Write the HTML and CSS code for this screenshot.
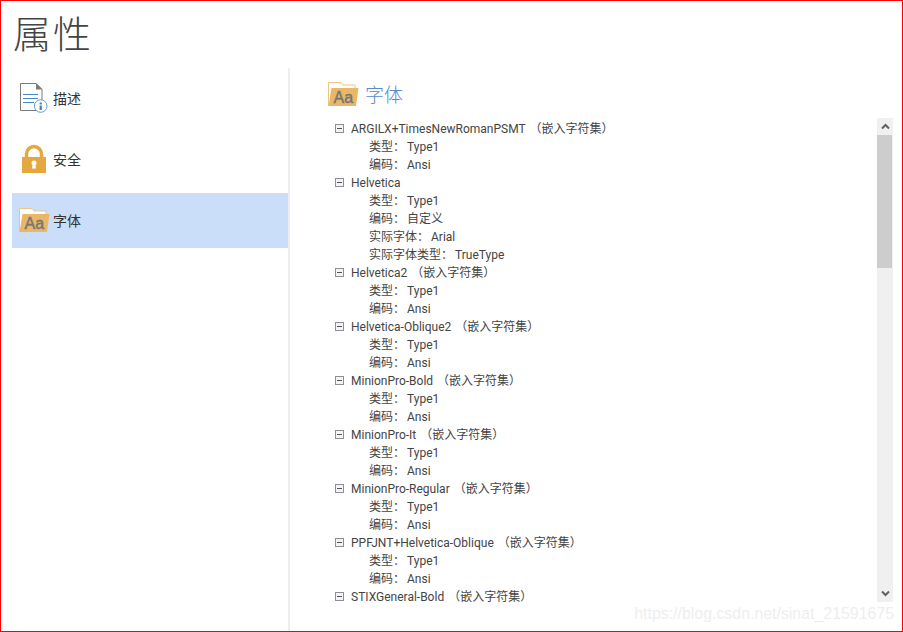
FILE: index.html
```html
<!DOCTYPE html>
<html lang="zh-CN">
<head>
  <meta charset="utf-8">
  <title>属性</title>
  <link rel="stylesheet" href="styles.css">
</head>
<body>
  <div class="window">
    <h1 class="title">属性</h1>
    <div class="main">
      <div class="sidebar">
        <div class="nav-item">
          <svg class="nav-icon" viewBox="0 0 34 35">
            <path d="M1.5 2.5H17L23 8.5V29.5H1.5Z" fill="#fff" stroke="#7a7a7a"/>
            <path d="M17 2L23.5 8.5H17Z" fill="#7a7a7a"/>
            <path d="M4 13.5H19M4 17.5H19M4 21.5H15" stroke="#4a86c5"/>
            <circle cx="21.7" cy="25" r="6.3" fill="#fff" stroke="#689bcf"/>
            <path d="M20.6 21.5h2.2v2h-2.2ZM20.6 24.5h2.2v4.5h-2.2Z" fill="#3f7fbd"/>
          </svg>
          <span>描述</span>
        </div>
        <div class="nav-item">
          <svg class="nav-icon" viewBox="0 0 34 35">
            <path d="M7.5 16V12a7.5 7.5 0 0 1 15 0V16" fill="none" stroke="#e5a840" stroke-width="3.5"/>
            <path d="M3 15H27V31H3Z" fill="#e5a840"/>
            <circle cx="15" cy="21" r="2.5" fill="#fff"/>
            <path d="M14 21H16L17 26.5H13Z" fill="#fff"/>
          </svg>
          <span>安全</span>
        </div>
        <div class="nav-item active">
          <svg class="nav-icon" viewBox="0 0 34 35">
            <path d="M0.5 29V5.5H13L15 8H27V12" fill="#fff" stroke="#efc581"/>
            <path d="M3.5 11H30.5L28 29H0.5Z" fill="#e9b766"/>
            <text class="folder-text" x="5.5" y="25.5">Aa</text>
          </svg>
          <span>字体</span>
        </div>
      </div>
      <div class="pane">
        <div class="pane-head">
          <svg class="nav-icon" viewBox="0 0 34 35">
            <path d="M0.5 29V5.5H13L15 8H27V12" fill="#fff" stroke="#efc581"/>
            <path d="M3.5 11H30.5L28 29H0.5Z" fill="#e9b766"/>
            <text class="folder-text" x="5.5" y="25.5">Aa</text>
          </svg>
          <span>字体</span>
        </div>
        <div class="content">
          <ul class="tree">
            <li>
              <div class="font-name"><i class="toggle"></i><span>ARGILX+TimesNewRomanPSMT <span class="tag">（嵌入字符集）</span></span></div>
              <ul class="props"><li>类型：<span class="val">Type1</span></li><li>编码：<span class="val">Ansi</span></li></ul>
            </li>
            <li>
              <div class="font-name"><i class="toggle"></i><span>Helvetica</span></div>
              <ul class="props"><li>类型：<span class="val">Type1</span></li><li>编码：<span class="val">自定义</span></li><li>实际字体：<span class="val">Arial</span></li><li>实际字体类型：<span class="val">TrueType</span></li></ul>
            </li>
            <li>
              <div class="font-name"><i class="toggle"></i><span>Helvetica2 <span class="tag">（嵌入字符集）</span></span></div>
              <ul class="props"><li>类型：<span class="val">Type1</span></li><li>编码：<span class="val">Ansi</span></li></ul>
            </li>
            <li>
              <div class="font-name"><i class="toggle"></i><span>Helvetica-Oblique2 <span class="tag">（嵌入字符集）</span></span></div>
              <ul class="props"><li>类型：<span class="val">Type1</span></li><li>编码：<span class="val">Ansi</span></li></ul>
            </li>
            <li>
              <div class="font-name"><i class="toggle"></i><span>MinionPro-Bold <span class="tag">（嵌入字符集）</span></span></div>
              <ul class="props"><li>类型：<span class="val">Type1</span></li><li>编码：<span class="val">Ansi</span></li></ul>
            </li>
            <li>
              <div class="font-name"><i class="toggle"></i><span>MinionPro-It <span class="tag">（嵌入字符集）</span></span></div>
              <ul class="props"><li>类型：<span class="val">Type1</span></li><li>编码：<span class="val">Ansi</span></li></ul>
            </li>
            <li>
              <div class="font-name"><i class="toggle"></i><span>MinionPro-Regular <span class="tag">（嵌入字符集）</span></span></div>
              <ul class="props"><li>类型：<span class="val">Type1</span></li><li>编码：<span class="val">Ansi</span></li></ul>
            </li>
            <li>
              <div class="font-name"><i class="toggle"></i><span>PPFJNT+Helvetica-Oblique <span class="tag">（嵌入字符集）</span></span></div>
              <ul class="props"><li>类型：<span class="val">Type1</span></li><li>编码：<span class="val">Ansi</span></li></ul>
            </li>
            <li>
              <div class="font-name"><i class="toggle"></i><span>STIXGeneral-Bold <span class="tag">（嵌入字符集）</span></span></div>
            </li>
          </ul>
          <div class="scrollbar">
            <div class="scroll-btn">
              <svg width="9" height="7" viewBox="0 0 9 7"><path d="M1 5.5L4.5 2L8 5.5" fill="none" stroke="#606060" stroke-width="2"/></svg>
            </div>
            <div class="scroll-thumb"></div>
            <div class="scroll-track"></div>
            <div class="scroll-btn">
              <svg width="9" height="7" viewBox="0 0 9 7"><path d="M1 1.5L4.5 5L8 1.5" fill="none" stroke="#606060" stroke-width="2"/></svg>
            </div>
          </div>
        </div>
      </div>
    </div>
    <div class="watermark">https://blog.csdn.net/sinat_21591675</div>
  </div>
</body>
</html>
```

FILE: styles.css
```css
body {
  margin: 0;
  background: #fff;
  color: #444;
  font-size: 12px;
  font-family: Roboto, "Noto Sans CJK SC", sans-serif;
}

.window {
  box-sizing: border-box;
  position: relative;
  display: flex;
  flex-direction: column;
  width: 903px;
  height: 632px;
  border: 1px solid #f00;
  overflow: hidden;
}

.title {
  margin: 0;
  height: 67px;
  padding-left: 12px;
  font-size: 38px;
  font-weight: 300;
  line-height: 61px;
  letter-spacing: 2px;
  color: #444;
  font-family: "Noto Sans CJK SC", sans-serif;
}

.main {
  flex: 1;
  display: flex;
  min-height: 0;
}

.sidebar {
  box-sizing: border-box;
  width: 278px;
  margin-left: 11px;
  padding-top: 3px;
  border-right: 2px solid #eee;
  display: flex;
  flex-direction: column;
  gap: 6px;
}

.nav-item {
  display: flex;
  align-items: center;
  height: 55px;
  padding-left: 7px;
  font-size: 14px;
  color: #333;
}

.nav-item span {
  margin-bottom: 2px;
}

.nav-item.active {
  background: #cadefa;
}

.nav-icon {
  width: 34px;
  height: 35px;
  flex: none;
}

.folder-text {
  font-family: "Liberation Sans", sans-serif;
  font-size: 16px;
  fill: #757575;
  stroke: #757575;
  stroke-width: 0.4px;
}

.pane {
  flex: 1;
  display: flex;
  flex-direction: column;
  padding: 9px 9px 0 38px;
  min-width: 0;
}

.pane-head {
  display: flex;
  align-items: center;
  gap: 3px;
  height: 35px;
  margin-bottom: 6px;
  font-size: 19px;
  font-weight: 300;
  color: #5a88cc;
}

.pane-head span {
  margin-bottom: 2px;
}

.content {
  display: flex;
  height: 487px;
}

.tree,
.props {
  margin: 0;
  padding: 0;
  list-style: none;
}

.tree {
  flex: 1;
  padding-top: 2px;
  overflow: hidden;
  line-height: 18px;
}

.font-name {
  display: flex;
  align-items: center;
  gap: 7px;
  padding-left: 7px;
}

.toggle {
  box-sizing: border-box;
  position: relative;
  width: 9px;
  height: 9px;
  margin-top: -2px;
  border: 1px solid #8b9096;
  background: #f4f4f4;
}

.toggle::after {
  content: "";
  position: absolute;
  left: 1px;
  top: 3px;
  width: 5px;
  height: 1px;
  background: #555;
}

.tag {
  margin-left: 1px;
}

.props {
  padding-left: 41px;
}

.val {
  margin-left: 2px;
}

.scrollbar {
  width: 16px;
  height: 484px;
  display: flex;
  flex-direction: column;
  background: #f0f0f0;
}

.scroll-btn {
  height: 17px;
  display: flex;
  align-items: center;
  justify-content: center;
}

.scroll-thumb {
  width: 15px;
  height: 133px;
  background: #cdcdcd;
}

.scroll-track {
  flex: 1;
}

.watermark {
  position: absolute;
  right: 8px;
  bottom: 8px;
  font-family: "Liberation Sans", sans-serif;
  font-size: 15.9px;
  color: #eee;
}
```
